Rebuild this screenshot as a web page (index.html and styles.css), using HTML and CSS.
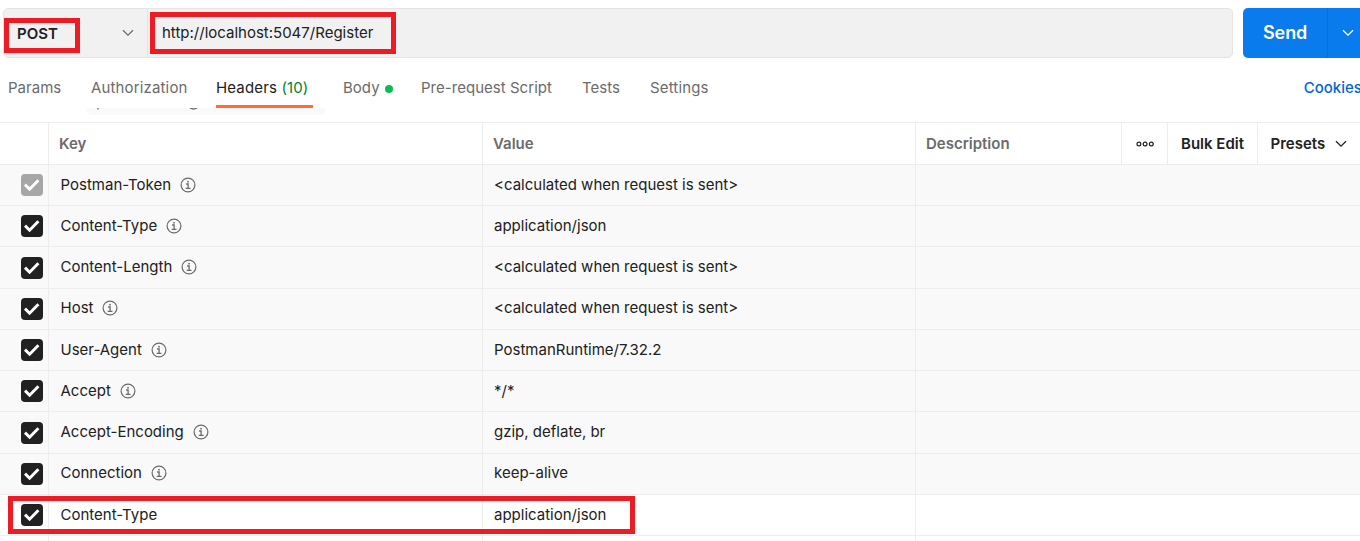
FILE: index.html
```html
<!DOCTYPE html>
<html lang="en">
<head>
<meta charset="utf-8">
<title>Request headers</title>
<link rel="stylesheet" href="styles.css">
</head>
<body>
<svg width="0" height="0" class="defs">
  <symbol id="check" viewBox="0 0 22 22"><path d="M4 10.6l4.6 4.6 8.8-9" fill="none" stroke="#fff" stroke-width="2.9"/></symbol>
  <symbol id="info" viewBox="0 0 16 16"><circle cx="8" cy="8" r="6.9" fill="none" stroke="#6b6b6b" stroke-width="1.2"/><path d="M6.1 7h2v4.2M5.7 11.3h4.8" fill="none" stroke="#6b6b6b" stroke-width="1.3"/><rect x="7.2" y="3.9" width="1.6" height="1.6" fill="#6b6b6b"/></symbol>
  <symbol id="chev" viewBox="0 0 12 8"><path d="M1 1.2l5 5 5-5" fill="none" stroke="currentColor" stroke-width="1.3"/></symbol>
</svg>
<main class="app">
  <div class="urlrow">
    <div class="urlbar">
      <div class="method"><span>POST</span><svg class="chev"><use href="#chev"/></svg></div>
      <div class="url">http://localhost:5047/Register</div>
    </div>
    <div class="send"><div class="send-label">Send</div><div class="send-more"><svg class="chev"><use href="#chev"/></svg></div></div>
  </div>
  <nav class="tabs">
    <span class="tab t1">Params</span><span class="tab t2">Authorization</span><span class="tab active t3">Headers <b>(10)</b></span><span class="tab t4">Body<i class="dot"></i></span><span class="tab t5">Pre-request Script</span><span class="tab t6">Tests</span><span class="tab t7">Settings</span>
    <span class="cookies">Cookies</span>
  </nav>
  <div class="strip"><div class="pill"><svg width="240" height="7" viewBox="0 0 240 7"><path d="M12 0v1.5M104 0q3.5 2 7 0" fill="none" stroke="#6b6b6b" stroke-width="1.4"/></svg></div></div>
  <div class="table">
    <div class="row head"><div></div><div>Key</div><div>Value</div><div class="desc"><span>Description</span></div><div class="more"><svg width="18" height="6" viewBox="0 0 18 6"><g fill="none" stroke="#212121" stroke-width="1.2"><circle cx="2.9" cy="3" r="1.9"/><circle cx="9.1" cy="3" r="1.9"/><circle cx="15.3" cy="3" r="1.9"/></g></svg></div><div class="bulk">Bulk Edit</div><div class="presets">Presets<svg class="chev"><use href="#chev"/></svg></div></div>
    <div class="row"><div><svg class="box off"><use href="#check"/></svg></div><div>Postman-Token<svg class="info"><use href="#info"/></svg></div><div>&lt;calculated when request is sent&gt;</div><div></div></div>
    <div class="row"><div><svg class="box"><use href="#check"/></svg></div><div>Content-Type<svg class="info"><use href="#info"/></svg></div><div>application/json</div><div></div></div>
    <div class="row tall"><div><svg class="box"><use href="#check"/></svg></div><div>Content-Length<svg class="info"><use href="#info"/></svg></div><div>&lt;calculated when request is sent&gt;</div><div></div></div>
    <div class="row raised"><div><svg class="box"><use href="#check"/></svg></div><div>Host<svg class="info"><use href="#info"/></svg></div><div>&lt;calculated when request is sent&gt;</div><div></div></div>
    <div class="row"><div><svg class="box"><use href="#check"/></svg></div><div>User-Agent<svg class="info"><use href="#info"/></svg></div><div>PostmanRuntime/7.32.2</div><div></div></div>
    <div class="row"><div><svg class="box"><use href="#check"/></svg></div><div>Accept<svg class="info"><use href="#info"/></svg></div><div>*/*</div><div></div></div>
    <div class="row tall"><div><svg class="box"><use href="#check"/></svg></div><div>Accept-Encoding<svg class="info"><use href="#info"/></svg></div><div>gzip, deflate, br</div><div></div></div>
    <div class="row raised"><div><svg class="box"><use href="#check"/></svg></div><div>Connection<svg class="info"><use href="#info"/></svg></div><div>keep-alive</div><div></div></div>
    <div class="row custom"><div><svg class="box"><use href="#check"/></svg></div><div>Content-Type</div><div>application/json</div><div></div></div>
    <div class="row custom"><div></div><div></div><div></div><div></div></div>
  </div>
  <div class="mark mark-method"></div>
  <div class="mark mark-url"></div>
  <div class="mark mark-header"></div>
</main>
</body>
</html>
```

FILE: styles.css
```css
* { box-sizing: border-box; }
body { margin: 0; background: #fff; color: #212121; font: 15px/20px Inter, sans-serif; overflow: hidden; }
.defs { position: absolute; }
.app { position: relative; width: 1360px; height: 541px; overflow: hidden; display: flex; flex-direction: column; white-space: nowrap; }
svg { flex: none; display: block; }
.chev { width: 12px; height: 8px; }

.urlrow { display: flex; gap: 10px; height: 58px; padding: 8px 0 0 3px; flex: none; }
.urlbar { display: flex; width: 1230px; height: 50px; background: #f1f1f1; border: 1px solid #e4e4e4; border-radius: 5px; }
.method { display: flex; align-items: center; justify-content: space-between; width: 144px; padding: 0 13px; border-right: 1px solid #e4e4e4; font-weight: 600; }
.method span { padding-top: 2px; }
.method .chev { color: #6b6b6b; }
.url { padding: 14px 0 0 14px; }
.send { display: flex; flex: 1; height: 50px; background: #097bed; color: #fff; border-radius: 5px 0 0 5px; }
.send-label { width: 85px; padding-left: 20px; line-height: 50px; font-size: 18px; font-weight: 600; letter-spacing: -.1px; border-right: 1px solid #0671dc; }
.send-more { padding: 21px 0 0 14px; }

.tabs { display: flex; height: 50px; flex: none; padding: 20px 0 0 8px; color: #6b6b6b; letter-spacing: .03px; }
.tab { flex: none; height: 30px; }
.t1 { width: 83px; }
.t2 { width: 125px; letter-spacing: .01em; }
.t3 { width: 97px; margin-right: 30px; }
.t4 { width: 78px; }
.t5 { width: 161px; }
.t6 { width: 68px; }
.t7 { letter-spacing: .01em; }
.active { color: #212121; border-bottom: 3px solid #ff6c37; letter-spacing: .01em; }
.active b { font-weight: 400; color: #007f31; }
.dot { display: inline-block; width: 8px; height: 8px; margin-left: 5px; border-radius: 50%; background: #0cbb52; }
.cookies { margin-left: 595px; color: #0265d2; font-weight: 500; letter-spacing: 0; }

.strip { height: 14px; flex: none; overflow: hidden; padding-left: 86px; }
.pill { width: 240px; height: 7px; background: #f9f9f9; border-radius: 0 0 12px 12px; }

.table { border-top: 1px solid #ededed; }
.row { display: grid; grid-template-columns: 49px 434px 433px 1fr; height: 41px; background: #f9f9f9; border-bottom: 1px solid #ededed; }
.row > div { display: flex; align-items: center; padding-left: 11.5px; border-right: 1px solid #ededed; }
.row > div:first-child { padding-left: 21px; }
.row > div:nth-child(3) { padding-left: 11px; }
.row > div:last-child { border-right: 0; }
.row.tall { height: 42px; }
.tall > div + div, .raised > div + div { padding-bottom: 2px; }
.row.custom { background: #fff; }
.row.head { height: 42px; background: #fff; grid-template-columns: 49px 434px 433px 206px 46px 90px 1fr; font-weight: 600; color: #6b6b6b; }
.head > div:nth-child(2), .head > div:nth-child(3) { padding-left: 10px; }
.head > .desc { padding-left: 10px; }
.head > .more { padding-left: 14px; }
.head > .bulk { padding-left: 13px; color: #212121; }
.head > .presets { padding-left: 12.5px; gap: 10px; color: #212121; }
.box { width: 22px; height: 22px; border-radius: 4px; background: #212121; }
.box.off { background: #a6a6a6; }
.info { width: 16px; height: 16px; margin-left: 9px; }

.mark { position: absolute; border: 5px solid #ed1c24; }
.mark-method { left: 4px; top: 18px; width: 76px; height: 35px; }
.mark-url { left: 150px; top: 12px; width: 246px; height: 42px; }
.mark-header { left: 8px; top: 496px; width: 627px; height: 38px; }
```
